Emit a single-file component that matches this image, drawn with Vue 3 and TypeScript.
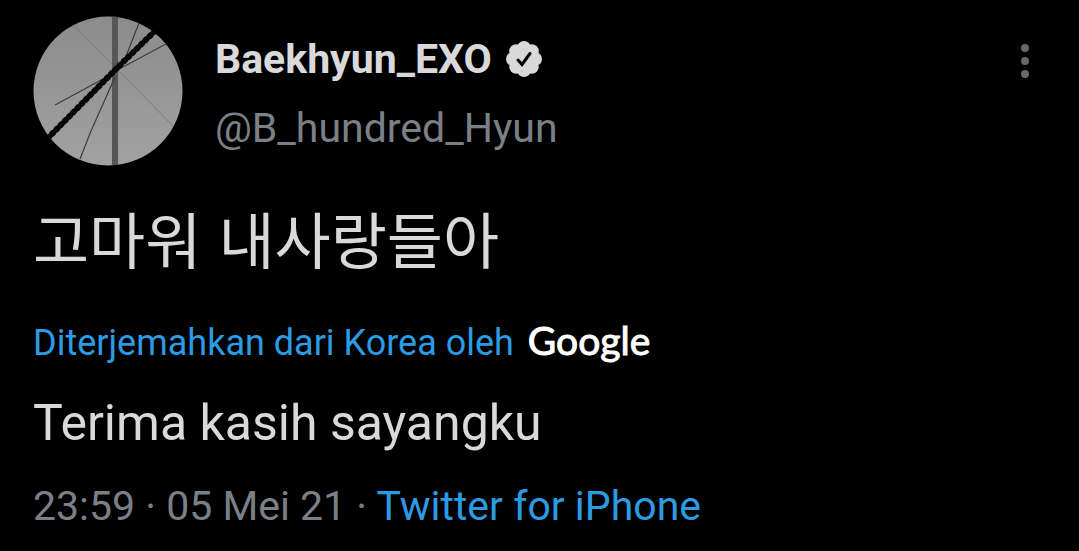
<script setup lang="ts">
interface Tweet {
  name: string
  handle: string
  text: string
  translation: string
  time: string
  date: string
  source: string
}

const tweet: Tweet = {
  name: 'Baekhyun_EXO',
  handle: '@B_hundred_Hyun',
  text: '고마워 내사랑들아',
  translation: 'Terima kasih sayangku',
  time: '23:59',
  date: '05 Mei 21',
  source: 'Twitter for iPhone',
}

const petals = Array.from({ length: 8 }, (_, i) => {
  const angle = (i * Math.PI) / 4
  return { x: 18 + 11 * Math.cos(angle), y: 18 + 11 * Math.sin(angle) }
})
</script>

<template>
  <article class="tweet">
    <header class="head">
      <a class="avatar" href="#" :aria-label="tweet.name">
        <svg viewBox="0 0 150 150" aria-hidden="true">
          <defs>
            <linearGradient id="sky" x1="0" y1="0" x2="0" y2="1">
              <stop offset="0" stop-color="#8b8b8b" />
              <stop offset="1" stop-color="#a2a2a2" />
            </linearGradient>
            <clipPath id="round"><circle cx="75" cy="75" r="74.5" /></clipPath>
          </defs>
          <g clip-path="url(#round)" fill="none">
            <rect width="150" height="150" fill="url(#sky)" />
            <path d="M40 9 83 52 140 110" stroke="#7c7c7c" stroke-width="1" />
            <path d="M82 0V150" stroke="#565656" stroke-width="6" />
            <path d="M22 89 70 63 90 51 133 28" stroke="#3c3c3c" stroke-width="1.200" />
            <path d="M47 143 58 115 82 61M90 48 106 7" stroke="#3c3c3c" stroke-width="1.200" />
            <path d="M14 123 83 53 124 13" stroke="#050505" stroke-width="5" />
            <path d="M14 123 83 53 124 13" stroke="#050505" stroke-width="6" stroke-dasharray="4 2" />
          </g>
        </svg>
      </a>
      <div class="names">
        <div class="name-row">
          <a class="name" href="#">{{ tweet.name }}</a>
          <svg class="badge" viewBox="0 0 36 36" role="img" aria-label="Verified">
            <circle cx="18" cy="18" r="15" />
            <circle v-for="(p, i) in petals" :key="i" :cx="p.x" :cy="p.y" r="7" />
            <path d="M12 19 16 23.500 24 12.500" />
          </svg>
        </div>
        <a class="handle" href="#">{{ tweet.handle }}</a>
      </div>
      <button class="more" type="button" aria-label="More">
        <svg viewBox="0 0 8 34" aria-hidden="true">
          <circle cx="4" cy="4" r="4" />
          <circle cx="4" cy="17" r="4" />
          <circle cx="4" cy="30" r="4" />
        </svg>
      </button>
    </header>
    <p class="text" lang="ko">{{ tweet.text }}</p>
    <p class="credit">
      <a href="#">Diterjemahkan dari Korea oleh</a>
      <span class="google">Google</span>
    </p>
    <p class="translation">{{ tweet.translation }}</p>
    <footer class="meta">
      <time datetime="2021-05-05T23:59">{{ tweet.time }} · {{ tweet.date }}</time>
      ·
      <a href="#">{{ tweet.source }}</a>
    </footer>
  </article>
</template>

<style>
body {
  margin: 0;
  background: #000;
}
</style>

<style scoped>
.tweet {
  padding: 16px 33px 20px;
  color: #d9d9d9;
  font-family: Roboto, "Noto Sans CJK KR", sans-serif;
}

a {
  color: inherit;
  text-decoration: none;
}

p {
  margin: 0;
}

.head {
  display: flex;
  align-items: flex-start;
}

.avatar,
.avatar svg {
  display: block;
  width: 150px;
  height: 150px;
}

.names {
  flex: 1;
  min-width: 0;
  padding: 19px 0 0 32px;
}

.name-row {
  display: flex;
  align-items: center;
  gap: 14px;
  height: 48px;
}

.name {
  font-size: 41px;
  font-weight: 700;
  line-height: 48px;
}

.badge {
  width: 36px;
  height: 36px;
  fill: #d9d9d9;
}

.badge path {
  fill: none;
  stroke: #000;
  stroke-width: 3;
  stroke-linecap: round;
}

.handle {
  display: block;
  margin-top: 21px;
  color: #7b8086;
  font-size: 41px;
  line-height: 48px;
}

.more {
  margin: 28px 17px 0 0;
  padding: 0;
  border: 0;
  background: none;
}

.more svg {
  display: block;
  width: 8px;
  height: 34px;
  fill: #66686a;
}

.text {
  margin-top: 32px;
  font-family: "Noto Sans CJK KR", sans-serif;
  font-size: 61px;
  line-height: 80px;
}

.credit {
  display: flex;
  align-items: baseline;
  gap: 14px;
  margin-top: 38px;
  color: #2b9ce4;
  font-size: 36px;
  line-height: 48px;
}

.google {
  color: #fff;
  font-family: Lato, sans-serif;
  font-size: 39px;
  font-weight: 400;
  -webkit-text-stroke: 1px #fff;
}

.translation {
  margin-top: 24px;
  font-size: 50px;
  line-height: 64px;
}

.meta {
  margin-top: 27px;
  color: #7b8086;
  font-size: 41px;
  line-height: 48px;
}

.meta a {
  color: #2b9ce4;
}
</style>
